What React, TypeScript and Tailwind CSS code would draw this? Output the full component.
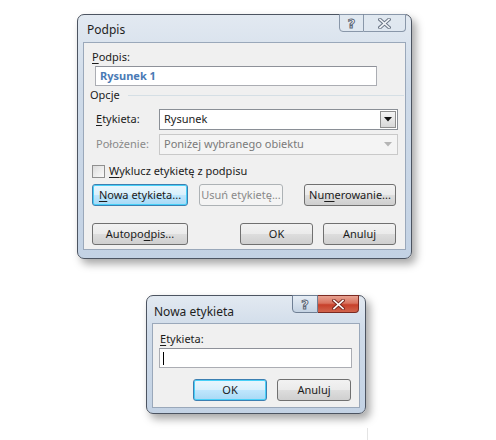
import type { ReactNode } from 'react';

const ui = "font-['Noto_Sans',sans-serif] text-[11px] text-[#1b1b1b]";

const Btn = ({
  w,
  children,
  focused,
  disabled,
}: {
  w: string;
  children: ReactNode;
  focused?: boolean;
  disabled?: boolean;
}) => {
  let cls =
    'border-[#707070] bg-[linear-gradient(#f2f2f2_0%,#ebebeb_48%,#dddddd_52%,#cfcfcf_100%)]';
  if (focused)
    cls =
      'border-[#3c7fb1] bg-[linear-gradient(#eaf6fd_0%,#d9f0fc_48%,#bee6fd_52%,#a7d9f5_100%)] shadow-[inset_0_0_0_1px_#48d0f8]';
  if (disabled) cls = 'border-[#adb2b5] bg-[#f4f4f4] text-[#838383]';
  return (
    <div
      className={`${w} flex h-[22px] shrink-0 items-center justify-center rounded-[3px] border ${cls}`}
    >
      <span className={disabled ? 'text-[#8a8a8a]' : ''}>{children}</span>
    </div>
  );
};

const U = ({ children }: { children: ReactNode }) => (
  <span className="underline underline-offset-2">{children}</span>
);

const Arrow = ({ color }: { color: string }) => (
  <svg width="8" height="5" viewBox="0 0 8 5">
    <path d="M0 0h8L4 4.5z" fill={color} />
  </svg>
);

const Combo = ({ text, disabled }: { text: string; disabled?: boolean }) => (
  <div
    className={`flex h-[21px] w-[239px] items-stretch border ${
      disabled ? 'border-[#c9c9c9] bg-[#f4f4f4] text-[#7a7a7a]' : 'border-[#8a8f96] bg-white'
    }`}
  >
    <div className="flex flex-1 items-center pl-[4px]">{text}</div>
    <div
      className={`m-px flex w-[16px] items-center justify-center border ${
        disabled
          ? 'border-transparent'
          : 'border-[#8f8f8f] bg-[linear-gradient(#f4f4f4,#d8d8d8)]'
      }`}
    >
      <Arrow color={disabled ? '#b5b5b5' : '#111'} />
    </div>
  </div>
);

const HelpGlyph = () => (
  <span className="font-['DejaVu_Sans',sans-serif] text-[13px] leading-none font-bold text-white [-webkit-text-stroke:1px_#5b6675]">
    ?
  </span>
);

const XGlyph = ({ outline, fill }: { outline: string; fill: string }) => (
  <svg width="13" height="11" viewBox="0 0 13 11">
    <path d="M2 1.5l9 8M11 1.5l-9 8" stroke={outline} strokeWidth="3.6" strokeLinecap="square" />
    <path d="M2 1.5l9 8M11 1.5l-9 8" stroke={fill} strokeWidth="1.6" strokeLinecap="square" />
  </svg>
);

const frame =
  'rounded-[7px] border border-[#4c5461] bg-[linear-gradient(180deg,#e2e9f1_0%,#cfdbe9_30%,#c3d2e4_100%)] shadow-[4px_5px_9px_rgba(0,0,0,0.35)]';

export default function App() {
  return (
    <div className={`${ui} h-[440px] w-[496px] overflow-hidden bg-white pt-[14px]`}>
      {/* Podpis dialog */}
      <div className={`ml-[77px] flex h-[245px] w-[335px] flex-col ${frame}`}>
        <div className="flex h-[27px] shrink-0 items-start">
          <span className="mt-[6px] ml-[9px] text-[12px] text-[#1e1e1e]">Podpis</span>
          <div className="mt-[-1px] mr-[5px] ml-auto flex h-[18px]">
            <div className="flex w-[25px] items-center justify-center rounded-bl-[4px] border border-[#8997a9] bg-[#dfe7f0]/60">
              <HelpGlyph />
            </div>
            <div className="flex w-[42px] items-center justify-center rounded-br-[4px] border border-l-0 border-[#8997a9] bg-[#dfe7f0]/60">
              <XGlyph outline="#6d7888" fill="#f3f5f8" />
            </div>
          </div>
        </div>
        <div className="mx-[5px] flex h-[208px] flex-col border border-[#9aa8ba] bg-[#f0f0f0] pt-[6px]">
          <div className="ml-[8px] flex h-[16px] items-center">
            <U>P</U>odpis:
          </div>
          <div className="mt-px ml-[11px] flex h-[20px] w-[282px] items-center border border-[#abadb3] border-t-[#8e9199] bg-white pl-[4px] font-bold text-[#4a7ab5]">
            Rysunek 1
          </div>
          <div className="mt-px flex h-[16px] items-center">
            <span className="ml-[6px]">Opcje</span>
            <div className="mr-[1px] ml-[8px] h-px flex-1 bg-[#d5dfe5]" />
          </div>
          <div className="mt-[6px] flex h-[21px] items-center">
            <span className="ml-[12px] w-[63px]">
              <U>E</U>tykieta:
            </span>
            <Combo text="Rysunek" />
          </div>
          <div className="mt-[4px] flex h-[21px] items-center">
            <span className="ml-[12px] w-[63px] text-[#8a8a8a]">Położenie:</span>
            <Combo text="Poniżej wybranego obiektu" disabled />
          </div>
          <div className="mt-[8px] flex h-[16px] items-center">
            <div className="ml-[8px] h-[13px] w-[13px] border border-[#8f8f8f] bg-[linear-gradient(135deg,#dcdcdc,#fbfbfb)]" />
            <span className="ml-[4px]">
              <U>W</U>yklucz etykietę z podpisu
            </span>
          </div>
          <div className="mt-[5px] flex">
            <div className="ml-[8px]">
              <Btn w="w-[96px]" focused>
                <U>N</U>owa etykieta...
              </Btn>
            </div>
            <div className="ml-[11px]">
              <Btn w="w-[84px]" disabled>
                Usuń etykietę...
              </Btn>
            </div>
            <div className="ml-[21px]">
              <Btn w="w-[92px]">
                Nu<U>m</U>erowanie...
              </Btn>
            </div>
          </div>
          <div className="mt-[17px] flex">
            <div className="ml-[8px]">
              <Btn w="w-[96px]">
                Autopo<U>d</U>pis...
              </Btn>
            </div>
            <div className="ml-[52px]">
              <Btn w="w-[73px]">OK</Btn>
            </div>
            <div className="ml-[10px]">
              <Btn w="w-[73px]">Anuluj</Btn>
            </div>
          </div>
        </div>
      </div>

      {/* Nowa etykieta dialog */}
      <div className={`mt-[36px] ml-[146px] flex h-[119px] w-[220px] flex-col ${frame}`}>
        <div className="flex h-[27px] shrink-0 items-start">
          <span className="mt-[7px] ml-[7px] text-[12px] text-[#1e1e1e]">Nowa etykieta</span>
          <div className="mt-[-1px] mr-[6px] ml-auto flex h-[18px]">
            <div className="flex w-[26px] items-center justify-center rounded-bl-[4px] border border-[#6f7f94] bg-[linear-gradient(#e6edf5,#c5d3e3)]">
              <HelpGlyph />
            </div>
            <div className="flex w-[41px] items-center justify-center rounded-br-[4px] border border-l-0 border-[#7a2a22] bg-[linear-gradient(#e8a291_0%,#d9735f_45%,#c7402b_55%,#d1644c_100%)]">
              <XGlyph outline="#7b2b22" fill="#ffffff" />
            </div>
          </div>
        </div>
        <div className="mx-[5px] flex h-[85px] flex-col border border-[#9aa8ba] bg-[#f0f0f0] pt-[8px]">
          <div className="ml-[7px] flex h-[15px] items-center">
            <U>E</U>tykieta:
          </div>
          <div className="mt-px ml-[6px] flex h-[20px] w-[193px] items-center border border-[#abadb3] border-t-[#8e9199] bg-white pl-[3px]">
            <div className="h-[13px] w-px bg-black" />
          </div>
          <div className="mt-[11px] flex">
            <div className="ml-[40px]">
              <Btn w="w-[74px]" focused>
                OK
              </Btn>
            </div>
            <div className="ml-[10px]">
              <Btn w="w-[74px]">Anuluj</Btn>
            </div>
          </div>
        </div>
      </div>
      <div className="mt-[14px] ml-[367px] h-[20px] w-px bg-[#e4e4e4]" />
    </div>
  );
}
